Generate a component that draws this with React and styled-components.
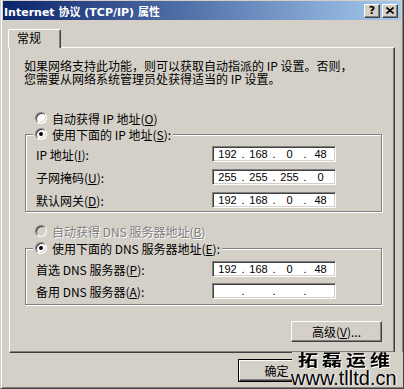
import React from 'react';
import styled, { createGlobalStyle } from 'styled-components';

const GlobalStyle = createGlobalStyle`
  html, body {
    margin: 0;
    padding: 0;
    background: #d4d0c8;
  }
  body {
    font-family: "Noto Sans CJK SC", "Liberation Sans", sans-serif;
    font-size: 12px;
    color: #000;
  }
`;

const Window = styled.div`
  position: relative;
  box-sizing: border-box;
  width: 404px;
  height: 389px;
  background: #d4d0c8;
  border-left: 1px solid #d4d0c8;
  border-right: 1px solid #404040;
  border-bottom: 1px solid #404040;
  box-shadow: inset 1px 0 0 #fff, inset -1px -1px 0 #808080;
  padding: 1px 2px 2px 2px;
  display: flex;
  flex-direction: column;
  overflow: hidden;
`;

const TitleBar = styled.div`
  height: 19px;
  display: flex;
  align-items: center;
  padding-left: 1px;
  padding-right: 3px;
  background: linear-gradient(to right, #0a246a, #a6caf0);
`;

const TitleText = styled.div`
  flex: 1;
  color: #fff;
  font-family: "DejaVu Sans", "Noto Sans CJK SC", sans-serif;
  font-weight: bold;
  font-size: 11px;
  white-space: nowrap;
`;

const CapButton = styled.div`
  box-sizing: border-box;
  width: 16px;
  height: 14px;
  margin-left: ${p => p.$gap || 0}px;
  background: #d4d0c8;
  border-top: 1px solid #fff;
  border-left: 1px solid #fff;
  border-right: 1px solid #404040;
  border-bottom: 1px solid #404040;
  box-shadow: inset -1px -1px 0 #808080;
  display: flex;
  align-items: center;
  justify-content: center;
  font-family: "DejaVu Sans", sans-serif;
  font-weight: bold;
  font-size: 11px;
  line-height: 1;
`;

const Body = styled.div`
  flex: 1;
  padding: 9px 6px 0 6px;
  display: flex;
  flex-direction: column;
`;

const TabStrip = styled.div`
  display: flex;
`;

const Tab = styled.div`
  position: relative;
  z-index: 1;
  box-sizing: border-box;
  width: 53px;
  height: 19px;
  margin-left: -1px;
  margin-bottom: -1px;
  padding-left: 8px;
  background: #d4d0c8;
  border-top: 1px solid #fff;
  border-left: 1px solid #fff;
  border-right: 1px solid #404040;
  border-radius: 2px 2px 0 0;
  box-shadow: inset -1px 0 0 #808080;
  line-height: 16px;
`;

const Panel = styled.div`
  box-sizing: border-box;
  width: 386px;
  height: 306px;
  border-top: 1px solid #fff;
  border-left: 1px solid #fff;
  border-right: 1px solid #404040;
  border-bottom: 1px solid #404040;
  box-shadow: inset -1px -1px 0 #808080;
  padding: 11px 12px 0 14px;
  display: flex;
  flex-direction: column;
`;

const Para = styled.p`
  margin: 0;
  line-height: 13px;
  white-space: nowrap;
`;

const RadioRow = styled.div`
  display: flex;
  align-items: center;
  height: 14px;
  margin-top: ${p => p.$top || 0}px;
  margin-left: ${p => p.$left || 0}px;
  white-space: nowrap;
  color: ${p => (p.$disabled ? '#808080' : '#000')};
  text-shadow: ${p => (p.$disabled ? '1px 1px 0 #fff' : 'none')};
`;

const RadioDot = styled.span`
  box-sizing: border-box;
  width: 12px;
  height: 12px;
  margin-right: 5px;
  border-radius: 50%;
  border: 1px solid;
  border-color: #808080 #fff #fff #808080;
  background: ${p => (p.$disabled ? '#d4d0c8' : '#fff')};
  box-shadow: inset 1px 1px 0 #404040, inset -1px -1px 0 #d4d0c8;
  display: flex;
  align-items: center;
  justify-content: center;
  &::after {
    content: '';
    width: 4px;
    height: 4px;
    border-radius: 50%;
    background: #000;
    display: ${p => (p.$checked ? 'block' : 'none')};
  }
`;

const Group = styled.fieldset`
  margin: ${p => p.$top || 0}px 0 0 1px;
  padding: 0 0 ${p => p.$bottom || 3}px 7px;
  border: 1px solid #808080;
  box-shadow: 1px 1px 0 #fff, inset 1px 1px 0 #fff;
  min-width: 0;
`;

const Legend = styled.legend`
  padding: 0 2px;
  margin: 0;
  background: #d4d0c8;
`;

const FieldRow = styled.div`
  display: flex;
  align-items: center;
  height: 16px;
  margin: ${p => p.$top}px 0 0 3px;
`;

const FieldLabel = styled.div`
  width: 176px;
  white-space: nowrap;
`;

const IpBox = styled.div`
  box-sizing: border-box;
  width: 124px;
  height: 16px;
  padding: 0 1px;
  background: #fff;
  border: 1px solid;
  border-color: #808080 #fff #fff #808080;
  box-shadow: inset 1px 1px 0 #404040, inset -1px -1px 0 #d4d0c8;
  display: flex;
  align-items: center;
  font-family: "Liberation Sans", sans-serif;
  font-size: 11px;
`;

const Octet = styled.span`
  flex: 1;
  text-align: center;
`;

const Sep = styled.span`
  width: 4px;
  text-align: center;
`;

const ButtonRow = styled.div`
  display: flex;
  justify-content: flex-end;
  margin-top: ${p => p.$top || 0}px;
`;

const Button = styled.div`
  box-sizing: border-box;
  width: ${p => p.$w || 75}px;
  height: 21px;
  background: #d4d0c8;
  border-top: 1px solid #fff;
  border-left: 1px solid #fff;
  border-right: 1px solid #404040;
  border-bottom: 1px solid #404040;
  box-shadow: inset -1px -1px 0 #808080;
  outline: ${p => (p.$default ? '1px solid #000' : 'none')};
  display: flex;
  align-items: center;
  justify-content: center;
  white-space: nowrap;
`;

const Footer = styled.div`
  display: flex;
  margin-top: 7px;
  padding-left: 230px;
`;

const Watermark = styled.div`
  position: absolute;
  left: 291px;
  top: 352px;
  width: 112px;
  height: 35px;
  background: #d4d0c8;
  display: flex;
  flex-direction: column;
  color: #000;
`;

const MarkCn = styled.div`
  margin-left: 6px;
  height: 17px;
  font-family: "Noto Sans CJK SC", sans-serif;
  font-size: 20px;
  line-height: 20px;
  letter-spacing: 4px;
  font-weight: bold;
  white-space: nowrap;
  transform: scaleY(0.78);
  transform-origin: top left;
  text-shadow: 1px 1px 0 #fff;
`;

const MarkUrl = styled.div`
  margin-left: -1px;
  font-family: "Liberation Sans", sans-serif;
  font-size: 20px;
  line-height: 18px;
  white-space: nowrap;
  text-shadow: 1px 0 0 #fff;
`;

const Radio = ({ checked, disabled, children, ...rest }) => (
  <RadioRow $disabled={disabled} {...rest}>
    <RadioDot $checked={checked} $disabled={disabled} />
    <span>{children}</span>
  </RadioRow>
);

const IpField = ({ value }) => {
  const parts = value ? value.split('.') : ['', '', '', ''];
  return (
    <IpBox>
      <Octet>{parts[0]}</Octet>
      <Sep>.</Sep>
      <Octet>{parts[1]}</Octet>
      <Sep>.</Sep>
      <Octet>{parts[2]}</Octet>
      <Sep>.</Sep>
      <Octet>{parts[3]}</Octet>
    </IpBox>
  );
};

const Field = ({ label, value, top }) => (
  <FieldRow $top={top}>
    <FieldLabel>{label}</FieldLabel>
    <IpField value={value} />
  </FieldRow>
);

export default function App() {
  return (
    <>
      <GlobalStyle />
      <Window>
        <TitleBar>
          <TitleText>Internet 协议 (TCP/IP) 属性</TitleText>
          <CapButton>?</CapButton>
          <CapButton $gap={2}>
            <svg width="8" height="7" viewBox="0 0 8 7">
              <path d="M0.5 0.5 L7.5 6.5 M7.5 0.5 L0.5 6.5" stroke="#000" strokeWidth="1.6" />
            </svg>
          </CapButton>
        </TitleBar>
        <Body>
          <TabStrip>
            <Tab>常规</Tab>
          </TabStrip>
          <Panel>
            <Para>
              如果网络支持此功能，则可以获取自动指派的 IP 设置。否则，
              <br />
              您需要从网络系统管理员处获得适当的 IP 设置。
            </Para>
            <Radio $top={26} $left={11}>
              自动获得 IP 地址(<u>O</u>)
            </Radio>
            <Group $top={2} $bottom={3}>
              <Legend>
                <Radio checked>
                  使用下面的 IP 地址(<u>S</u>):
                </Radio>
              </Legend>
              <Field top={5} label={<>IP 地址(<u>I</u>):</>} value="192.168.0.48" />
              <Field top={7} label={<>子网掩码(<u>U</u>):</>} value="255.255.255.0" />
              <Field top={7} label={<>默认网关(<u>D</u>):</>} value="192.168.0.48" />
            </Group>
            <Radio disabled $top={12} $left={11}>
              自动获得 DNS 服务器地址(<u>B</u>)
            </Radio>
            <Group $top={3} $bottom={5}>
              <Legend>
                <Radio checked>
                  使用下面的 DNS 服务器地址(<u>E</u>):
                </Radio>
              </Legend>
              <Field top={6} label={<>首选 DNS 服务器(<u>P</u>):</>} value="192.168.0.48" />
              <Field top={6} label={<>备用 DNS 服务器(<u>A</u>):</>} value="" />
            </Group>
            <ButtonRow $top={16}>
              <Button $w={91}>
                高级(<u>V</u>)...
              </Button>
            </ButtonRow>
          </Panel>
          <Footer>
            <Button $default>确定</Button>
          </Footer>
        </Body>
        <Watermark>
          <MarkCn>拓磊运维</MarkCn>
          <MarkUrl>www.tlltd.cn</MarkUrl>
        </Watermark>
      </Window>
    </>
  );
}
